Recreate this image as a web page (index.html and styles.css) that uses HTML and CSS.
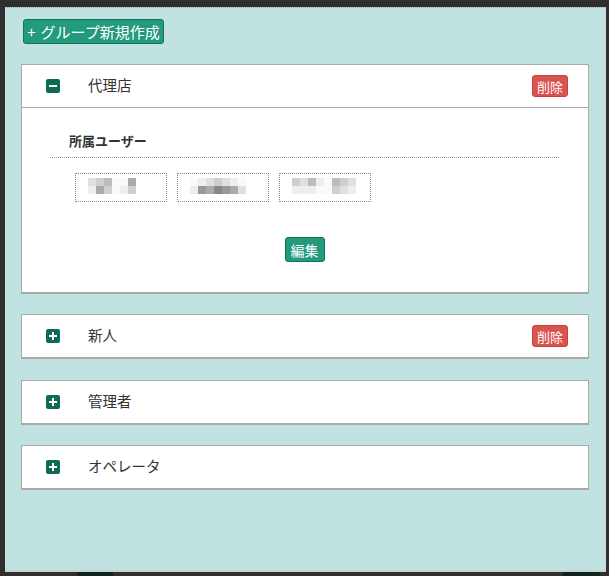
FILE: index.html
```html
<html><head>
<meta charset="utf-8">
<title>グループ管理</title>
<link rel="stylesheet" href="styles.css">
</head><body>

<div class="behind">
<div class="bbtn bbtn1"></div>
<div class="bbtn bbtn2"></div>
</div>

<div class="modal">
<div class="toolbar"><span class="btn btn-green btn-new"><span class="plus">+</span>グループ新規作成</span></div>

<div class="panel">
<div class="head">
<span class="toggle"><span class="bar-h"></span></span>
<span class="name">代理店</span>
<span class="btn btn-red">削除</span>
</div>
<div class="body">
<div class="label">所属ユーザー</div>
<div class="users">
<div class="user"><div class="pix">
<div class="row"><i class="g2"></i><i class="g3"></i><i class="g4"></i><i class="g0"></i><i class="g0"></i><i class="g5"></i></div>
<div class="row"><i class="g1"></i><i class="g5"></i><i class="g3"></i><i class="g0"></i><i class="g1"></i><i class="g3"></i></div>
</div></div>
<div class="user"><div class="pix">
<div class="row"><i class="g0"></i><i class="g1"></i><i class="g2"></i><i class="g3"></i><i class="g2"></i><i class="g1"></i><i class="g0"></i></div>
<div class="row"><i class="g1"></i><i class="g6"></i><i class="g5"></i><i class="g7"></i><i class="g6"></i><i class="g5"></i><i class="g2"></i></div>
</div></div>
<div class="user"><div class="pix">
<div class="row"><i class="g3"></i><i class="g2"></i><i class="g4"></i><i class="g1"></i><i class="g0"></i><i class="g4"></i><i class="g3"></i><i class="g2"></i></div>
<div class="row"><i class="g1"></i><i class="g1"></i><i class="g1"></i><i class="g0"></i><i class="g0"></i><i class="g3"></i><i class="g2"></i><i class="g1"></i></div>
</div></div>
</div>
<div class="actions"><span class="btn btn-green btn-edit">編集</span></div>
</div>
</div>

<div class="panel">
<div class="head">
<span class="toggle"><span class="bar-h"></span><span class="bar-v"></span></span>
<span class="name">新人</span>
<span class="btn btn-red">削除</span>
</div>
</div>

<div class="panel">
<div class="head">
<span class="toggle"><span class="bar-h"></span><span class="bar-v"></span></span>
<span class="name">管理者</span>
</div>
</div>

<div class="panel">
<div class="head">
<span class="toggle"><span class="bar-h"></span><span class="bar-v"></span></span>
<span class="name">オペレータ</span>
</div>
</div>

</div>
</body></html>
```

FILE: styles.css
```css
body{margin:0;background:#2f2f2f;font-family:"Noto Sans CJK JP","Noto Sans",sans-serif;color:#333;}

.behind{position:absolute;left:0;top:0;width:609px;height:576px;overflow:hidden;}
.bbtn{position:absolute;top:571px;height:8px;background:#0b2620;border-radius:3px;}
.bbtn1{left:77px;width:36px;}
.bbtn2{left:563px;width:37px;}

.modal{position:relative;box-sizing:border-box;width:601px;height:565px;margin:7px 0 0 5px;padding:11px 16px 0 15px;background:#c0e3e2;border-top:1px dotted #9aa;border-left:1px solid #d8d8d8;border-right:1px solid #d8d8d8;border-bottom:2px solid #d0d0d0;}

.toolbar{height:25px;margin:0 0 20px 2px;display:flex;}

.btn{display:inline-flex;align-items:center;justify-content:center;box-sizing:border-box;color:#fff;border-radius:3px;line-height:1;}
.btn-green{background:#229a7c;border:1px solid #17705a;}
.btn-red{background:#d9534f;border:1px solid #c9403c;}
.btn-new{width:141px;height:25px;font-size:15px;padding-bottom:1px;}
.plus{margin-right:5px;}
.btn-edit{width:40px;height:25px;font-size:14px;}
.head .btn-red{width:36px;height:22px;font-size:13px;margin-left:auto;}

.panel{background:#fff;border:1px solid #aaa;border-bottom:2px solid #aaa;margin-bottom:20.4px;}
.panel:first-of-type{margin-bottom:20px;}
.head{display:flex;align-items:center;height:42px;padding:0 20px 0 24px;}
.panel .body{border-top:1px solid #aaa;padding:24px 29px 29px 28px;height:131px;}

.toggle{position:relative;width:14px;height:14px;background:#0e6b56;border-radius:2px;}
.bar-h{position:absolute;left:3px;top:6px;width:8px;height:2px;background:#fff;}
.bar-v{position:absolute;left:6px;top:3px;width:2px;height:8px;background:#fff;}
.name{margin-left:28px;font-size:14.5px;color:#333;padding-bottom:3px;}

.label{font-size:13px;font-weight:bold;line-height:18px;padding:0 0 7px 19px;border-bottom:1px dotted #999;}

.users{display:flex;gap:10px;margin:15px 0 0 25px;}
.user{box-sizing:border-box;width:92px;height:29px;border:1px dotted #888;padding:4px 0 0 12px;}
.pix{display:flex;flex-direction:column;}
.row{display:flex;}
.row i{display:block;width:8px;height:8px;}
.g0{background:#fafafa;}
.g1{background:#eeeeee;}
.g2{background:#e0e0e0;}
.g3{background:#cfcfcf;}
.g4{background:#bcbcbc;}
.g5{background:#aaaaaa;}
.g6{background:#999999;}
.g7{background:#888888;}

.actions{display:flex;justify-content:center;margin-top:35px;}
```
